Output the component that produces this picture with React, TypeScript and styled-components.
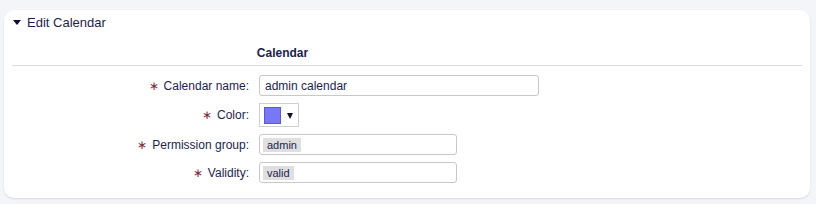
import React from 'react';
import styled, { createGlobalStyle } from 'styled-components';

const GlobalStyle = createGlobalStyle`
  html, body {
    margin: 0;
    padding: 0;
    background: #f4f5f8;
    font-family: 'Liberation Sans', Arial, sans-serif;
    font-size: 12px;
    color: #1d1d4f;
  }
`;

const Page = styled.div`
  padding: 10px 6px 6px 4px;
`;

const Card = styled.div`
  background: #ffffff;
  border-radius: 10px;
  box-shadow: 0 1px 2px rgba(60, 60, 120, 0.15);
  padding: 4px 8px 15px 8px;
`;

const Header = styled.div`
  display: flex;
  align-items: center;
  gap: 6px;
  height: 16px;
  padding: 0 0 0 1px;
  font-size: 13px;
  color: #1d1d4f;
`;

const Caret = styled.span`
  width: 0;
  height: 0;
  border-left: 4px solid transparent;
  border-right: 4px solid transparent;
  border-top: 5px solid #0d1030;
`;

const SectionTitle = styled.div`
  font-weight: bold;
  font-size: 12px;
  color: #1d1d4f;
  padding: 16px 0 5px 0;
  margin: 0 0 0 233px;
  width: 75px;
  text-align: center;
`;

const Divider = styled.div`
  height: 1px;
  background: #dcdcdc;
  margin: 0 0 9px 0;
`;

const Form = styled.div`
  display: grid;
  grid-template-columns: 237px 1fr;
  column-gap: 10px;
  row-gap: 7px;
  align-items: center;
`;

const Label = styled.label`
  text-align: right;
  font-size: 12px;
  color: #1d1d4f;
`;

const Star = styled.span`
  color: #7e1b3e;
  margin-right: 5px;
  font-size: 12px;
`;

const TextInput = styled.div<{ $w: number }>`
  width: ${p => p.$w}px;
  height: 21px;
  box-sizing: border-box;
  border: 1px solid #c8c8c8;
  border-radius: 3px;
  display: flex;
  align-items: center;
  padding: 0 4px 0 5px;
  font-size: 12px;
  color: #1d1d4f;
`;

const Tag = styled.span`
  background: #dfdfdf;
  padding: 1px 4px;
  font-size: 11px;
  color: #1d1d4f;
  margin-left: -2px;
`;

const ColorBox = styled.div`
  width: 40px;
  height: 24px;
  box-sizing: border-box;
  border: 1px solid #cfcfcf;
  display: flex;
  align-items: center;
  gap: 6px;
  padding-left: 4px;
`;

const Swatch = styled.span`
  width: 15px;
  height: 15px;
  background: #7878f6;
  border: 1px solid #5a5ad0;
`;

const Arrow = styled.span`
  width: 0;
  height: 0;
  border-left: 3px solid transparent;
  border-right: 3px solid transparent;
  border-top: 6px solid #10131f;
  margin-top: 1px;
`;

const App: React.FC = () => (
  <Page>
    <GlobalStyle />
    <Card>
      <Header>
        <Caret />
        Edit Calendar
      </Header>
      <SectionTitle>Calendar</SectionTitle>
      <Divider />
      <Form>
        <Label><Star>∗</Star>Calendar name:</Label>
        <TextInput $w={280}>admin calendar</TextInput>
        <Label><Star>∗</Star>Color:</Label>
        <ColorBox>
          <Swatch />
          <Arrow />
        </ColorBox>
        <Label><Star>∗</Star>Permission group:</Label>
        <TextInput $w={198}><Tag>admin</Tag></TextInput>
        <Label><Star>∗</Star>Validity:</Label>
        <TextInput $w={198}><Tag>valid</Tag></TextInput>
      </Form>
    </Card>
  </Page>
);

export default App;
